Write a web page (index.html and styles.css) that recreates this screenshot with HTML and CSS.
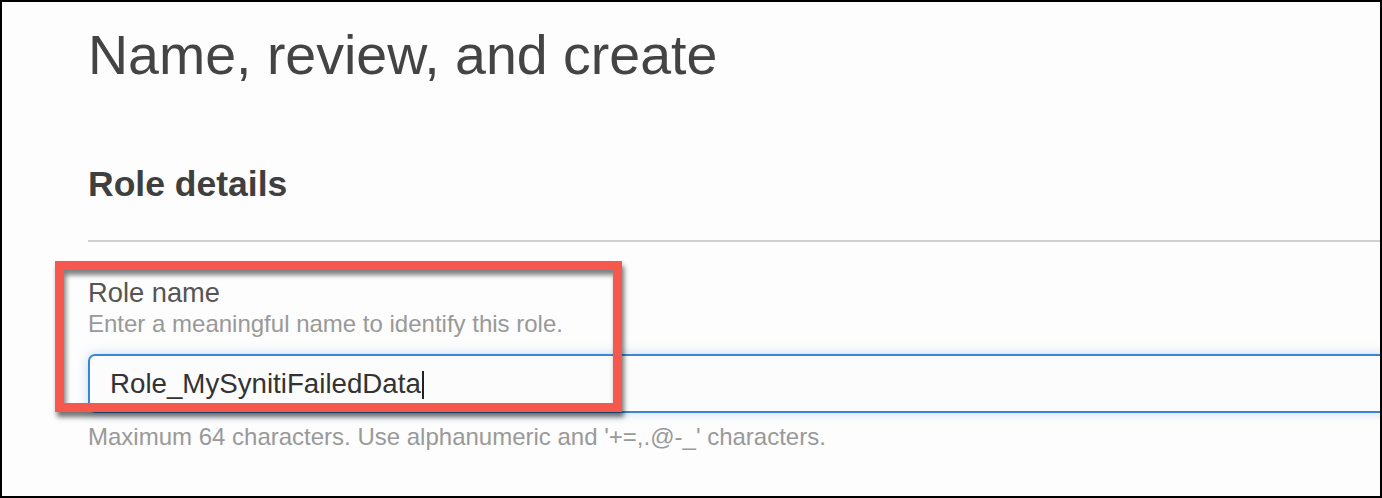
FILE: index.html
```html
<!DOCTYPE html>
<html lang="en">
<head>
    <meta charset="UTF-8">
    <meta name="viewport" content="width=device-width, initial-scale=1.0">
    <title>Name, review, and create</title>
    <link rel="stylesheet" href="styles.css">
</head>
<body>
<div class="frame">
    <div class="page">
        <h1 class="page-title">Name, review, and create</h1>
        <h2 class="section-title">Role details</h2>
        <div class="divider"></div>
        <div class="field">
            <div class="field-label">Role name</div>
            <div class="field-desc">Enter a meaningful name to identify this role.</div>
            <div class="text-input">Role_MySynitiFailedData<span class="caret"></span></div>
            <div class="field-hint">Maximum 64 characters. Use alphanumeric and '+=,.@-_' characters.</div>
        </div>
    </div>
    <!-- annotation box drawn over the screenshot -->
    <div class="highlight"></div>
</div>
</body>
</html>
```

FILE: styles.css
```css
body {
    margin: 0;
    padding: 0;
    font-family: "Liberation Sans", Arial, sans-serif;
}
.frame {
    position: relative;
    box-sizing: border-box;
    width: 1382px;
    height: 498px;
    border: 2px solid #000;
    background-color: #fdfdfd;
    overflow: hidden;
}
.page {
    padding-left: 86px;
}
.page-title {
    margin: 25px 0 0;
    font-size: 55.5px;
    line-height: 56px;
    font-weight: normal;
    color: #444;
}
.section-title {
    margin: 84px 0 0;
    font-size: 35.5px;
    line-height: 35px;
    font-weight: bold;
    color: #3f3f3f;
}
.divider {
    margin-top: 38px;
    height: 2px;
    background-color: #cfcfcf;
}
.field-label {
    margin-top: 37px;
    font-size: 27.3px;
    line-height: 27px;
    color: #555;
}
.field-desc {
    margin-top: 6px;
    font-size: 24px;
    line-height: 24px;
    color: #999;
}
.text-input {
    box-sizing: border-box;
    width: calc(100% + 40px);
    height: 59px;
    margin-top: 18px;
    padding-left: 20px;
    border: 2px solid #3d85d4;
    border-radius: 7px;
    background-color: #fcfcfc;
    box-shadow: 0 0 12px rgba(61, 133, 212, 0.28);
    font-size: 27.7px;
    line-height: 55px;
    color: #333;
}
.caret {
    display: inline-block;
    width: 2px;
    height: 28px;
    margin-left: 1px;
    vertical-align: -6px;
    background-color: #222;
}
.field-hint {
    margin-top: 12px;
    font-size: 24px;
    line-height: 23px;
    color: #999;
}
.highlight {
    position: absolute;
    left: 53px;
    top: 259px;
    width: 549px;
    height: 133px;
    border: 9px solid #f5584c;
    box-shadow: 2px 5px 5px rgba(0, 0, 0, 0.55), inset 2px 5px 5px rgba(0, 0, 0, 0.5);
}
```
